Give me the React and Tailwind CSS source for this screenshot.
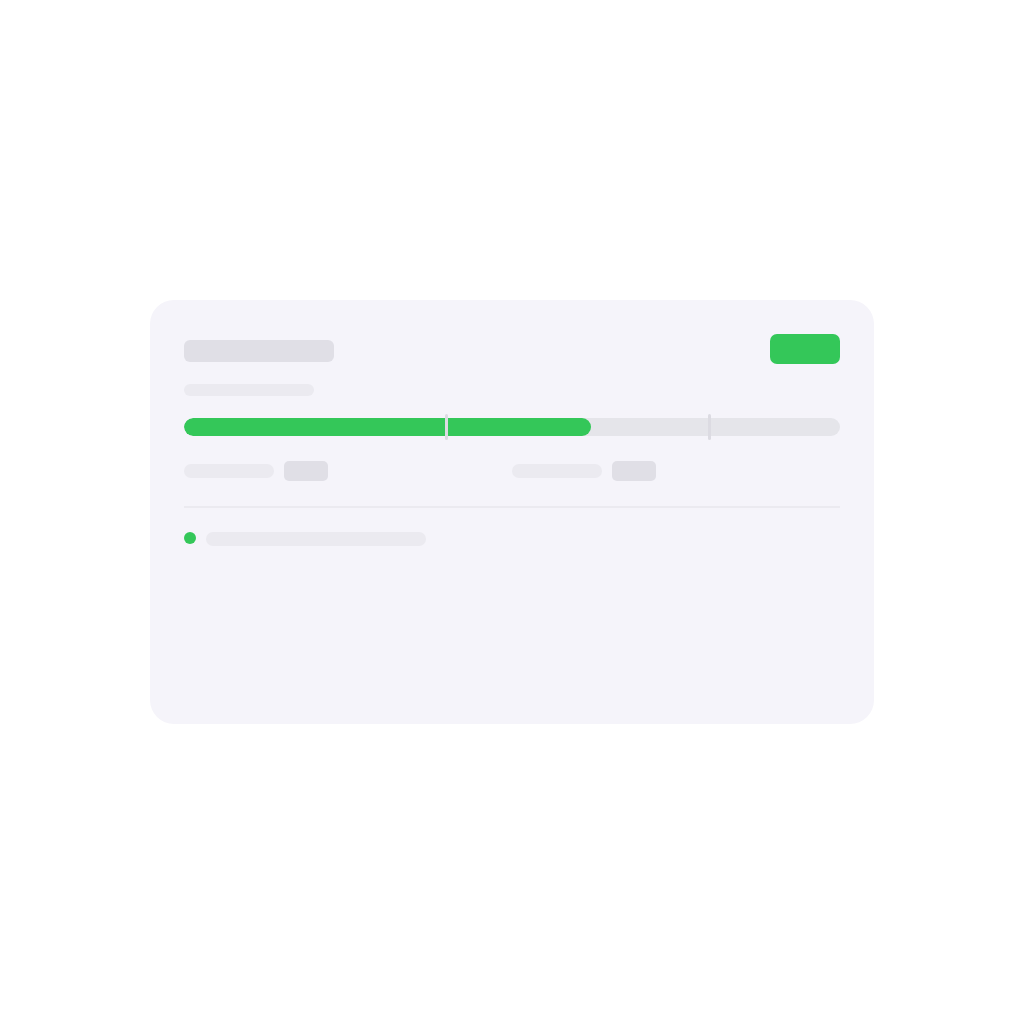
export default function App() {
  const fill = 62;
  const marks = [40, 80];
  return (
    <div className="w-[1024px] h-[1024px] bg-white flex items-center justify-center" style={{ fontFamily: '"Liberation Sans", Arial, sans-serif' }}>
      <div className="w-[724px] h-[424px] bg-[#f5f4fa] rounded-[24px] px-[34px] pt-[34px] flex flex-col">
        {/* header */}
        <div className="flex justify-between items-start">
          <div className="mt-[6px] w-[150px] h-[22px] rounded-[6px] bg-[#e0dfe6]" />
          <div className="w-[70px] h-[30px] rounded-[7px] bg-[#34c759]" />
        </div>
        <div className="mt-[20px] w-[130px] h-[12px] rounded-full bg-[#ebeaf0]" />

        {/* progress */}
        <div className="mt-[22px] relative h-[18px]">
          <div className="h-full rounded-full bg-[#e5e5ea] overflow-hidden">
            <div className="h-full rounded-full bg-[#34c759]" style={{ width: `${fill}%` }} />
          </div>
          {marks.map((m) => (
            <div
              key={m}
              className="absolute top-[-4px] w-[3px] h-[26px] rounded-full bg-[#dcdbe2]"
              style={{ left: `calc(${m}% - 1px)` }}
            />
          ))}
        </div>

        {/* stats */}
        <div className="mt-[25px] grid grid-cols-2">
          <div className="flex items-center gap-[10px]">
            <div className="w-[90px] h-[14px] rounded-full bg-[#ebeaf0]" />
            <div className="w-[44px] h-[20px] rounded-[5px] bg-[#e0dfe6]" />
          </div>
          <div className="flex items-center gap-[10px]">
            <div className="w-[90px] h-[14px] rounded-full bg-[#ebeaf0]" />
            <div className="w-[44px] h-[20px] rounded-[5px] bg-[#e0dfe6]" />
          </div>
        </div>

        <div className="mt-[25px] h-[2px] bg-[#ebeaf0]" />

        <div className="mt-[24px] flex items-start gap-[10px]">
          <div className="w-[12px] h-[12px] rounded-full bg-[#34c759]" />
          <div className="w-[220px] h-[14px] rounded-full bg-[#ebeaf0]" />
        </div>
      </div>
    </div>
  );
}
